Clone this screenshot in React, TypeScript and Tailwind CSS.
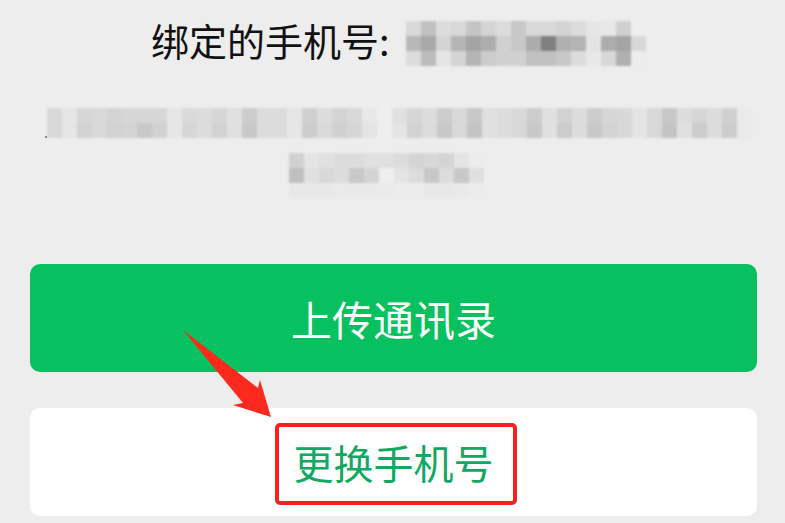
const phone = [
  ["d8", "c0", "dc", "d8", "c4", "d4", "dc", "c8", "d8", "d8", "d4", "dc", "e6", "e8", "d0", "ee"],
  ["b8", "a8", "d4", "b4", "a4", "ac", "d0", "c8", "ac", "80", "b0", "b4", "e4", "ac", "a4", "d8"],
  ["dc", "bc", "e4", "d4", "b4", "cc", "d0", "d0", "c0", "c0", "c8", "dc", "e8", "d8", "b0", "ec"],
];

const lineOne = [
  ["d8", "e6", "d6", "d8", "d4", "d6", "d6", "d6", "e6", "da", "dc", "d6", "e0", "cc", "dc", "dc", "e6", "d0", "dc", "d4", "d8", "e8", "ee", "e0", "d6", "dc", "cc", "d8", "c8", "e0", "dc", "d8", "cc", "e0", "d2", "dc", "cc", "d6", "d8", "e4", "d8", "c8", "dc", "d6", "dc", "d0", "ea"],
  ["d8", "e6", "d2", "d8", "d2", "d4", "c8", "d2", "e6", "d6", "dc", "d2", "e0", "c8", "dc", "dc", "e6", "cc", "da", "d0", "d6", "e4", "ee", "e4", "d2", "dc", "c8", "d8", "c4", "e0", "dc", "d8", "c8", "e0", "cc", "dc", "c8", "d4", "d8", "e4", "d8", "c4", "e0", "cc", "dc", "cc", "ea"],
];

const lineTwo = [
  ["d0", "e4", "e0", "dc", "dc", "e0", "e0", "dc", "d4", "d8", "d4", "e4", "ec"],
  ["c0", "e0", "d8", "dc", "c8", "d4", "ee", "e4", "dc", "c8", "dc", "c8", "e0"],
  ["e8", "e8", "e8", "ea", "ea", "ea", "ea", "ec", "ec", "e8", "e8", "ea", "ec"],
];

function Mosaic({ rows, className }: { rows: string[][]; className: string }) {
  const width = rows[0].length * 15;
  const height = rows.length * 15;
  return (
    <svg viewBox={`0 0 ${width} ${height}`} width={width} height={height} className={className}>
      {rows.map((row, y) =>
        row.map((c, x) => (
          <rect key={`${x}-${y}`} x={x * 15} y={y * 15} width={15.5} height={15.5} fill={`#${c}${c}${c}`} />
        )),
      )}
    </svg>
  );
}

export default function App() {
  return (
    <div
      className="relative h-[523px] w-full overflow-hidden bg-[#ededed] pr-[28px] pl-[30px]"
      style={{ fontFamily: '"Noto Sans CJK SC", sans-serif' }}
    >
      {/* Bound phone number */}
      <div className="flex h-[86px] items-center pl-[121px]">
        <span className="mb-[6px] text-[38px] leading-none text-[#111111]">绑定的手机号:</span>
        <Mosaic rows={phone} className="ml-[16px] blur-[1.2px]" />
      </div>

      {/* Blurred description */}
      <div className="flex flex-col items-center pt-[22px]">
        <Mosaic rows={lineOne} className="ml-[12px] blur-[1.2px]" />
        <Mosaic rows={lineTwo} className="mt-[15px] mr-[14px] blur-[1.2px]" />
      </div>

      {/* Buttons */}
      <div className="mt-[66px] flex flex-col gap-[36px]">
        <button className="flex h-[108px] items-center justify-center rounded-[10px] bg-[#07c160] pt-[2px] text-[41px] text-white">
          上传通讯录
        </button>
        <button className="flex h-[108px] items-center justify-center rounded-[10px] bg-white text-[40px] text-[#12a862]">
          更换手机号
        </button>
      </div>

      {/* Annotation over the second button */}
      <div className="absolute top-[423px] left-[275px] h-[82px] w-[242px] rounded-[5px] border-[4px] border-[#f5201f]" />
      <svg className="absolute top-[325px] left-[175px]" width="105" height="100" viewBox="0 0 105 100">
        <polygon points="8,5 83,63 85,55 96,92 58,80 68,78" fill="#fb2a1c" />
      </svg>
      <div className="absolute top-[136px] left-[45px] size-[2px] bg-[#8a8a8a]" />
    </div>
  );
}
